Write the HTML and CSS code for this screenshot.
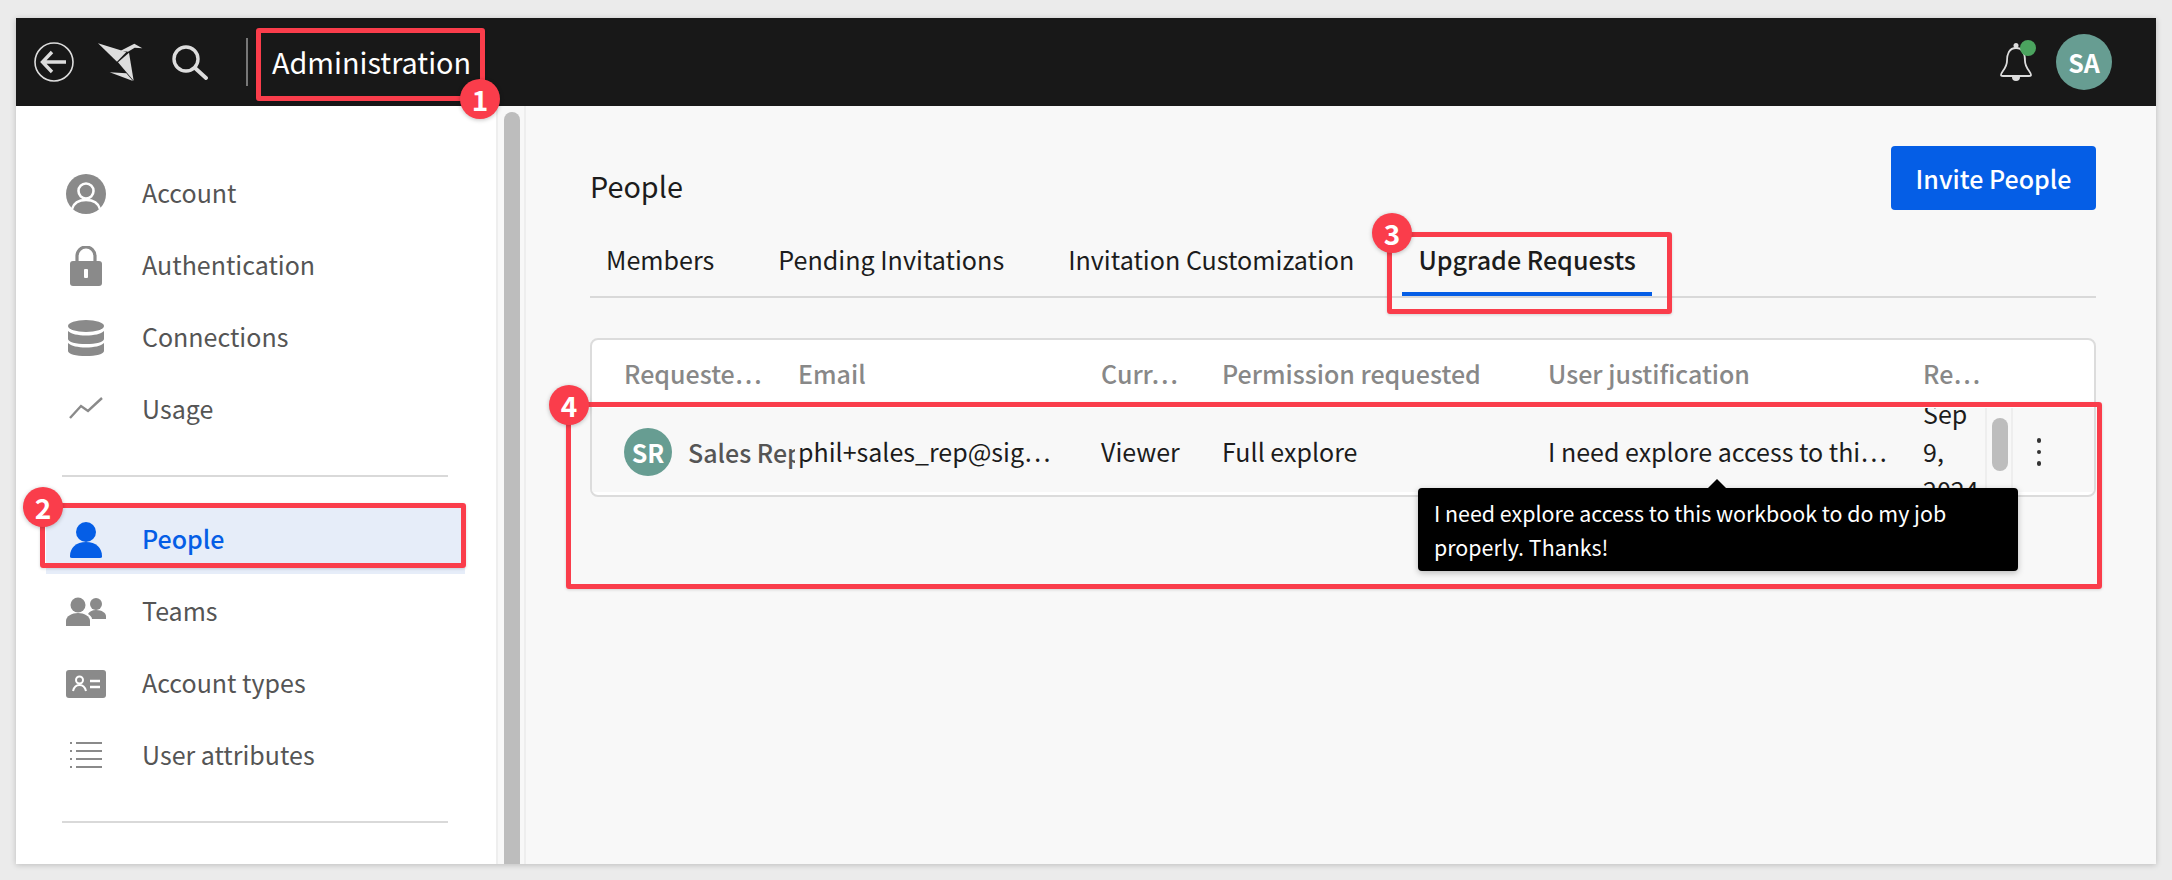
FILE: index.html
```html
<!DOCTYPE html>
<html lang="en">
<head>
  <meta charset="UTF-8">
  <title>Administration - People</title>
  <link rel="stylesheet" href="styles.css">
</head>
<body>
  <div class="app">
    <header class="topbar">
      <svg class="top-icon back" viewBox="0 0 40 40"><circle cx="20" cy="20" r="19" fill="none" stroke="#ddd" stroke-width="1.6"/><path d="M32 20H9M18 10L8.500 20l9.500 10" fill="none" stroke="#ddd" stroke-width="3.400"/></svg>
      <svg class="top-icon logo" viewBox="235 40 135 115"><g fill="#ddd"><polygon points="235,40 320,66 292,95"/><polygon points="303,62 344,41 368,55 345,53 325,65"/><polygon points="295,97 328,68 342,152"/><polygon points="270,127 320,130 340,153"/></g></svg>
      <svg class="top-icon search" viewBox="0 0 37 36"><circle cx="15" cy="15" r="12" fill="none" stroke="#ddd" stroke-width="3.400"/><path d="M24 24l11 10" stroke="#ddd" stroke-width="3.800" stroke-linecap="round"/></svg>
      <span class="top-sep"></span>
      <span class="top-title">Administration</span>
      <span class="top-space"></span>
      <span class="bell">
        <svg viewBox="0 0 34 40" width="34" height="40"><path d="M17 6c-7 0-9 6-9 13 0 7-6 11-6 14 0 1 1 1 2 1h26c1 0 2 0 2-1 0-3-6-7-6-14 0-7-2-13-9-13z" fill="none" stroke="#ddd" stroke-width="1.800"/><circle cx="17" cy="3.500" r="2.500" fill="#ddd"/><path d="M13 35h8a4 4 0 0 1-8 0z" fill="#ddd"/></svg>
        <span class="bell-dot"></span>
      </span>
      <span class="avatar avatar-top">SA</span>
    </header>

    <div class="body">
      <nav class="sidebar">
        <a class="nav-item">
          <svg viewBox="0 0 40 40"><circle cx="20" cy="20" r="20" fill="#8a8a8a"/><circle cx="20" cy="17" r="7.500" fill="none" stroke="#fff" stroke-width="2.600"/><path d="M6 35c2-7 8-9 14-9s12 2 14 9" fill="none" stroke="#fff" stroke-width="2.600"/></svg>
          Account
        </a>
        <a class="nav-item">
          <svg viewBox="0 0 40 40"><path d="M11 18v-8a9 9 0 0 1 18 0v8" fill="none" stroke="#8a8a8a" stroke-width="3.200"/><rect x="4" y="15" width="32" height="25" rx="3" fill="#8a8a8a"/><rect x="18" y="23" width="4" height="9" rx="1" fill="#fff"/></svg>
          Authentication
        </a>
        <a class="nav-item">
          <svg viewBox="0 0 40 40"><g fill="#8a8a8a"><ellipse cx="20" cy="8" rx="18" ry="6"/><path d="M2 13c3 3 10 4.500 18 4.500s15-1.500 18-4.500v8c0 3-8 5-18 5S2 24 2 21z"/><path d="M2 25c3 3 10 4.500 18 4.500s15-1.500 18-4.500v8c0 3-8 5-18 5S2 36 2 33z"/></g></svg>
          Connections
        </a>
        <a class="nav-item">
          <svg viewBox="0 0 40 40"><path d="M4 28l11-12 7 5 14-13" fill="none" stroke="#8a8a8a" stroke-width="2.400"/></svg>
          Usage
        </a>
        <hr class="nav-line">
        <a class="nav-item active">
          <svg viewBox="0 0 40 40"><circle cx="20" cy="12" r="10" fill="#055ee6"/><path d="M6 38c-2 0-2-1-2-2 0-8 6-14 16-14s16 6 16 14c0 1 0 2-2 2z" fill="#055ee6"/></svg>
          People
        </a>
        <a class="nav-item">
          <svg viewBox="0 0 40 40"><g fill="#8a8a8a"><circle cx="12" cy="13" r="7.500"/><path d="M0 34v-5c0-5 6-8 12-8s12 3 12 8v5z"/><circle cx="30" cy="12" r="6"/><path d="M26 27h14v-3c0-3-4-6-10-6-4 0-7 2-8 4 2 1 4 3 4 5z"/></g></svg>
          Teams
        </a>
        <a class="nav-item">
          <svg viewBox="0 0 40 40"><rect y="6" width="40" height="28" rx="3" fill="#8a8a8a"/><circle cx="13.500" cy="16" r="3.500" fill="none" stroke="#fff" stroke-width="2"/><path d="M7 27c1-4 4-6 6.500-6s5.500 2 6.500 6" fill="none" stroke="#fff" stroke-width="2"/><path d="M24 17h10M24 23h10" stroke="#fff" stroke-width="2.400"/></svg>
          Account types
        </a>
        <a class="nav-item">
          <svg viewBox="0 0 40 40"><path d="M10 7h26M10 15h26M10 23h26M10 31h26" stroke="#8a8a8a" stroke-width="2"/><path d="M4 7h2M4 15h2M4 23h2M4 31h2" stroke="#8a8a8a" stroke-width="2"/></svg>
          User attributes
        </a>
        <hr class="nav-line">
      </nav>
      <div class="side-scroll"><span class="side-thumb"></span></div>

      <main class="main">
        <div class="page-head">
          <h1>People</h1>
          <button class="invite">Invite People</button>
        </div>
        <div class="tabs">
          <span class="tab">Members</span>
          <span class="tab">Pending Invitations</span>
          <span class="tab">Invitation Customization</span>
          <span class="tab current">Upgrade Requests</span>
        </div>
        <div class="table">
          <div class="row head">
            <span class="c1 cell">Requeste…</span>
            <span class="c2 cell">Email</span>
            <span class="c3 cell">Curr…</span>
            <span class="c4 cell">Permission requested</span>
            <span class="c5 cell">User justification</span>
            <span class="c6 cell">Re…</span>
          </div>
          <div class="row data">
            <span class="c1 who"><span class="avatar avatar-row">SR</span><span class="who-name">Sales Rep</span></span>
            <span class="c2 cell">phil+sales_rep@sig…</span>
            <span class="c3 cell">Viewer</span>
            <span class="c4 cell">Full explore</span>
            <span class="c5 cell">I need explore access to thi…</span>
            <span class="c6 cell date">Sep 9, 2024</span>
            <span class="row-scroll"><span class="row-thumb"></span></span>
            <span class="row-menu"><i></i><i></i><i></i></span>
          </div>
        </div>
        <div class="tooltip">I need explore access to this workbook to do my job properly. Thanks!</div>
      </main>
    </div>
  </div>

  <!-- callouts -->
  <div class="mark m1"></div><span class="badge b1">1</span>
  <div class="mark m2"></div><span class="badge b2">2</span>
  <div class="mark m3"></div><span class="badge b3">3</span>
  <div class="mark m4"></div><span class="badge b4">4</span>
</body>
</html>
```

FILE: styles.css
```css
* {
  box-sizing: border-box;
}
html, body {
  height: 100%;
}
body {
  margin: 0;
  padding: 18px 16px 16px;
  background: #ebebeb;
  font-family: "Noto Sans CJK SC", "Noto Sans", sans-serif;
  font-size: 25px;
  overflow: hidden;
}
.app {
  height: 846px;
  display: flex;
  flex-direction: column;
  box-shadow: 0 1px 6px rgba(0,0,0,0.2);
}

/* top bar */
.topbar {
  height: 88px;
  flex: none;
  background: #181818;
  color: #fff;
  display: flex;
  align-items: center;
  padding-left: 18px;
}
.top-icon {
  flex: none;
  display: block;
}
.back {
  width: 40px;
  height: 40px;
}
.logo {
  width: 45px;
  height: 39px;
  margin-left: 24px;
}
.search {
  width: 37px;
  height: 36px;
  margin-left: 28px;
}
.top-sep {
  width: 2px;
  height: 48px;
  background: #777;
  margin-left: 38px;
}
.top-title {
  margin-left: 24px;
  font-size: 28.8px;
  line-height: 42px;
}
.top-space {
  flex: 1;
}
.bell {
  position: relative;
  width: 34px;
  height: 40px;
  margin-right: 23px;
}
.bell-dot {
  position: absolute;
  left: 21px;
  top: -2px;
  width: 16px;
  height: 16px;
  border-radius: 50%;
  background: #4ba45f;
}
.avatar {
  display: flex;
  align-items: center;
  justify-content: center;
  border-radius: 50%;
  background: #679d92;
  color: #fff;
  flex: none;
}
.avatar-top {
  width: 56px;
  height: 56px;
  margin-right: 44px;
  font-size: 25px;
  font-weight: 700;
}

/* sidebar */
.body {
  flex: 1;
  display: flex;
  min-height: 0;
}
.sidebar {
  width: 480px;
  flex: none;
  background: #fff;
  padding: 54px 31px 0 30px;
}
.nav-item {
  height: 68px;
  margin-bottom: 4px;
  display: flex;
  align-items: center;
  gap: 36px;
  padding: 0 0 4px 20px;
  color: #555;
  line-height: 38px;
}
.nav-item svg {
  width: 40px;
  height: 40px;
  margin-top: 4px;
  flex: none;
}
.nav-item.active {
  background: #e6edf9;
  color: #055ee6;
  font-weight: 500;
}
.nav-line {
  margin: 31px 17px 29px 16px;
  border: 0;
  height: 2px;
  background: #d9d9d9;
}
.side-scroll {
  width: 30px;
  flex: none;
  background: #f8f8f8;
  border-left: 2px solid #eee;
  border-right: 2px solid #eee;
  padding: 6px 6px 0;
}
.side-thumb {
  display: block;
  height: 100%;
  width: 16px;
  background: #bdbdbd;
  border-radius: 8px 8px 0 0;
}

/* main */
.main {
  flex: 1;
  position: relative;
  background: #f8f8f8;
  padding: 40px 60px 0 64px;
  color: #1c1c1c;
}
.page-head {
  display: flex;
  justify-content: space-between;
  align-items: center;
  height: 64px;
}
.page-head h1 {
  margin: 16px 0 0;
  font-size: 28.8px;
  font-weight: 400;
  line-height: 42px;
}
.invite {
  width: 205px;
  height: 64px;
  border: 0;
  border-radius: 4px;
  background: #055ee6;
  color: #fff;
  font: 500 25px "Noto Sans CJK SC", "Noto Sans", sans-serif;
}
.tabs {
  display: flex;
  gap: 32px;
  margin-top: 20px;
  height: 68px;
  border-bottom: 2px solid #d9d9d9;
  font-size: 25.1px;
}
.tab {
  padding: 0 16px;
  line-height: 58px;
  height: 66px;
}
.tab.current {
  font-weight: 500;
  border-bottom: 4px solid #055ee6;
}
.table {
  margin-top: 40px;
  height: 159px;
  border: 2px solid #dcdcdc;
  border-radius: 8px;
  background: #fff;
  overflow: hidden;
}
.row {
  display: flex;
  align-items: center;
}
.row.head {
  height: 68px;
  color: #888;
  font-weight: 500;
}
.row.data {
  height: 84px;
  padding-top: 4px;
  background: #f8f8f8;
  overflow: hidden;
}
.cell {
  white-space: nowrap;
  line-height: 38px;
  padding-bottom: 3px;
}
.c1 { width: 174px; margin-left: 32px; flex: none; }
.c2 { width: 303px; flex: none; }
.c3 { width: 121px; flex: none; }
.c4 { width: 326px; flex: none; }
.c5 { width: 375px; flex: none; }
.c6 { width: 62px; flex: none; }
.who {
  display: flex;
  align-items: center;
  gap: 16px;
  width: 171px;
  margin-right: 3px;
  overflow: hidden;
}
.avatar-row {
  width: 48px;
  height: 48px;
  font-size: 25px;
  font-weight: 700;
}
.who-name {
  color: #555;
  font-weight: 500;
  white-space: nowrap;
  line-height: 38px;
}
.date {
  white-space: normal;
}
.row-scroll {
  width: 28px;
  align-self: stretch;
  margin-top: -4px;
  flex: none;
  border-left: 2px solid #eee;
  border-right: 2px solid #eee;
  padding: 10px 5px 0;
}
.row-thumb {
  display: block;
  width: 16px;
  height: 53px;
  border-radius: 8px;
  background: #bdbdbd;
}
.row-menu {
  width: 52px;
  flex: none;
  display: flex;
  flex-direction: column;
  align-items: center;
  gap: 7px;
}
.row-menu i {
  width: 4.500px;
  height: 4.500px;
  border-radius: 50%;
  background: #333;
}
.tooltip {
  position: absolute;
  left: 892px;
  top: 382px;
  width: 600px;
  padding: 8px 16px 7px;
  background: #000;
  color: #fff;
  font-size: 21.4px;
  line-height: 34px;
  border-radius: 4px;
  box-shadow: 0 2px 6px rgba(0,0,0,0.25);
}
.tooltip::before {
  content: "";
  position: absolute;
  left: 289px;
  top: -9px;
  border-left: 10px solid transparent;
  border-right: 10px solid transparent;
  border-bottom: 10px solid #000;
}

/* callouts */
.mark {
  position: absolute;
  border: 5px solid #fa3d4b;
  border-radius: 3px;
  box-shadow: 0 1px 3px rgba(0,0,0,0.15);
}
.m1 { left: 256px; top: 28px; width: 229px; height: 73px; }
.m2 { left: 40px; top: 503px; width: 426px; height: 65px; }
.m3 { left: 1387px; top: 232px; width: 285px; height: 82px; }
.m4 { left: 566px; top: 402px; width: 1536px; height: 187px; }
.badge {
  position: absolute;
  width: 40px;
  height: 40px;
  border-radius: 50%;
  background: #fa3d4b;
  color: #fff;
  font-size: 28px;
  font-weight: 700;
  line-height: 40px;
  text-align: center;
  box-shadow: 0 1px 4px rgba(0,0,0,0.25);
}
.b1 { left: 460px; top: 79px; }
.b2 { left: 23px; top: 487px; }
.b3 { left: 1372px; top: 213px; }
.b4 { left: 549px; top: 385px; }
```
